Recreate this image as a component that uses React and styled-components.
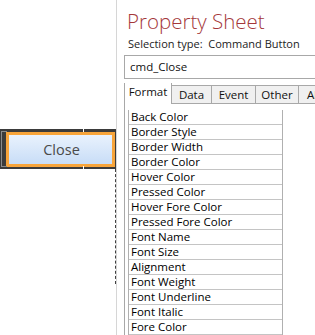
import React from "react";
import styled, { createGlobalStyle } from "styled-components";

const Global = createGlobalStyle`
  html, body { margin: 0; padding: 0; background: #ffffff; }
  body { font-family: "Open Sans", "Noto Sans", sans-serif; }
`;

const Screen = styled.div`
  width: 315px;
  height: 335px;
  display: flex;
  overflow: hidden;
  background: #ffffff;
`;

const DesignArea = styled.div`
  width: 116px;
  flex: none;
  position: relative;
  display: flex;
  flex-direction: column;
  padding-top: 129px;
  box-sizing: border-box;
`;

const SectionBar = styled.div`
  height: 40px;
  background: #3b3b3b;
  display: flex;
  align-items: center;
  padding-left: 6px;
  padding-right: 1px;
  position: relative;
`;

const Handle = styled.div`
  position: absolute;
  left: 1px;
  top: 2px;
  bottom: 2px;
  width: 5px;
  border: 1px solid #8a8a8a;
  border-right: none;
`;

const Tick = styled.div`
  position: absolute;
  left: 83px;
  width: 1px;
  height: 3px;
  background: #ffffff;
  ${(p) => (p.$bottom ? "bottom: 0;" : "top: 0;")}
`;

const CloseButton = styled.div`
  flex: 1;
  height: 35px;
  box-sizing: border-box;
  border: 3px solid #f7a43a;
  background: linear-gradient(#e9f2fd, #c8ddf7);
  display: flex;
  align-items: center;
  justify-content: center;
  font-size: 14.5px;
  color: #4a4a4a;
  padding-left: 2px;
`;

const DashedGuide = styled.div`
  position: absolute;
  right: 0;
  top: 169px;
  height: 115px;
  width: 0;
  border-right: 1px dashed #404040;
`;

const Divider = styled.div`
  width: 1px;
  flex: none;
  background: #d6d6d6;
`;

const Sheet = styled.div`
  flex: 1;
  display: flex;
  flex-direction: column;
  padding-left: 7px;
  min-width: 0;
`;

const Title = styled.div`
  font-size: 20.5px;
  font-weight: 300;
  color: #a4373a;
  line-height: 26px;
  margin-top: 8px;
  padding-left: 3px;
  white-space: nowrap;
`;

const SelectionType = styled.div`
  font-size: 11px;
  color: #222;
  line-height: 16px;
  margin-top: 2px;
  padding-left: 4px;
  white-space: nowrap;
`;

const NameBox = styled.div`
  margin-top: 3px;
  height: 25px;
  box-sizing: border-box;
  border: 1px solid #a8a8a8;
  border-right: none;
  display: flex;
  align-items: center;
  padding-left: 5px;
  font-size: 11.5px;
  color: #111;
`;

const TabStrip = styled.div`
  margin-top: 4px;
  display: flex;
  align-items: flex-end;
  height: 22px;
  overflow: hidden;
`;

const Tab = styled.div`
  box-sizing: border-box;
  height: ${(p) => (p.$active ? "22px" : "19px")};
  width: ${(p) => p.$w}px;
  flex: none;
  border: 1px solid #a8a8a8;
  border-left: ${(p) => (p.$first ? "1px solid #a8a8a8" : "none")};
  border-bottom: ${(p) => (p.$active ? "none" : "1px solid #a8a8a8")};
  background: ${(p) => (p.$active ? "#ffffff" : "#f0f0f0")};
  font-size: 11.5px;
  color: #111;
  display: flex;
  align-items: ${(p) => (p.$active ? "flex-start" : "center")};
  padding-top: ${(p) => (p.$active ? "1px" : "0")};
  justify-content: center;
  white-space: nowrap;
  overflow: hidden;
`;

const Panel = styled.div`
  flex: 1;
  border-left: 1px solid #a8a8a8;
  padding: 6px 0 0 3px;
`;

const List = styled.div`
  width: 153px;
  border-left: 1px solid #b0b0b0;
  border-right: 1px solid #b0b0b0;
`;

const Row = styled.div`
  height: 15px;
  box-sizing: border-box;
  border-bottom: 1px solid #c4c4c4;
  font-size: 11.5px;
  line-height: 14px;
  color: #000;
  padding-left: 2px;
  white-space: nowrap;
  overflow: hidden;
`;

const tabs = [
  { label: "Format", w: 48, active: true },
  { label: "Data", w: 40 },
  { label: "Event", w: 44 },
  { label: "Other", w: 43 },
  { label: "All", w: 30 },
];

const props = [
  "Back Color",
  "Border Style",
  "Border Width",
  "Border Color",
  "Hover Color",
  "Pressed Color",
  "Hover Fore Color",
  "Pressed Fore Color",
  "Font Name",
  "Font Size",
  "Alignment",
  "Font Weight",
  "Font Underline",
  "Font Italic",
  "Fore Color",
];

export default function App() {
  return (
    <>
      <Global />
      <Screen>
        <DesignArea>
          <SectionBar>
            <Handle />
            <Tick />
            <Tick $bottom />
            <CloseButton>Close</CloseButton>
          </SectionBar>
          <DashedGuide />
        </DesignArea>
        <Divider />
        <Sheet>
          <Title>Property Sheet</Title>
          <SelectionType>Selection type:&nbsp; Command Button</SelectionType>
          <NameBox>cmd_Close</NameBox>
          <TabStrip>
            {tabs.map((t, i) => (
              <Tab key={t.label} $w={t.w} $active={t.active} $first={i === 0}>
                {t.label}
              </Tab>
            ))}
          </TabStrip>
          <Panel>
            <List>
              {props.map((p) => (
                <Row key={p}>{p}</Row>
              ))}
            </List>
          </Panel>
        </Sheet>
      </Screen>
    </>
  );
}
